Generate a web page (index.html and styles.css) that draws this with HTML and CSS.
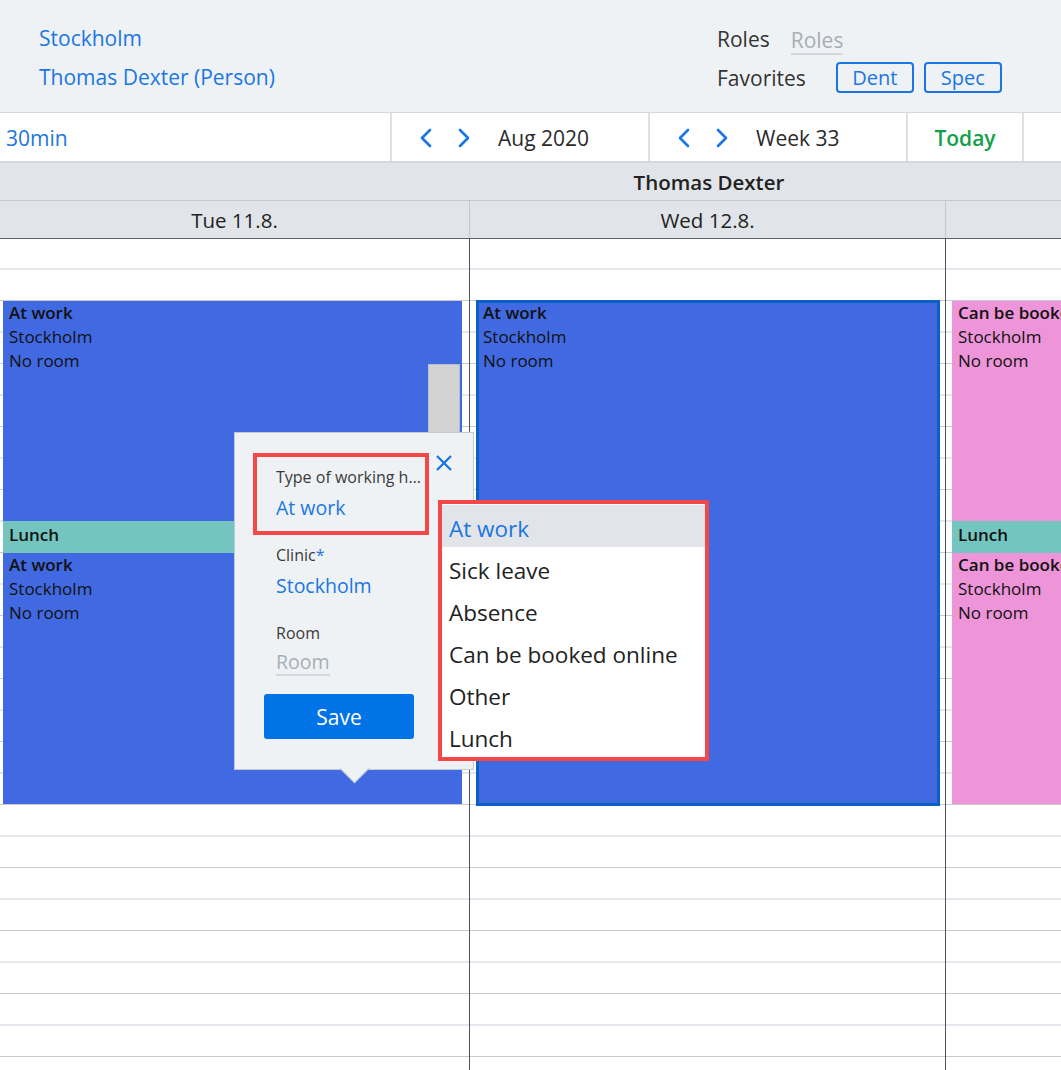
FILE: index.html
```html
<!DOCTYPE html>
<html>
<head>
<title>Schedule</title>
<link rel="stylesheet" href="styles.css">
</head>
<body>

<div class="topbar">
    <div class="topbar-left">
        <a class="link">Stockholm</a>
        <a class="link">Thomas Dexter (Person)</a>
    </div>
    <div class="topbar-right">
        <div class="top-row">
            <span class="top-label">Roles</span>
            <span class="placeholder roles-input">Roles</span>
        </div>
        <div class="top-row">
            <span class="top-label">Favorites</span>
            <button class="fav-btn">Dent</button>
            <button class="fav-btn">Spec</button>
        </div>
    </div>
</div>

<div class="toolbar">
    <div class="tool-seg seg-interval"><span class="link">30min</span></div>
    <div class="tool-seg seg-nav">
        <svg class="chev" viewBox="0 0 14 20"><polyline points="11,2 3,10 11,18"/></svg>
        <svg class="chev" viewBox="0 0 14 20"><polyline points="3,2 11,10 3,18"/></svg>
        <span class="nav-text">Aug 2020</span>
    </div>
    <div class="tool-seg seg-nav">
        <svg class="chev" viewBox="0 0 14 20"><polyline points="11,2 3,10 11,18"/></svg>
        <svg class="chev" viewBox="0 0 14 20"><polyline points="3,2 11,10 3,18"/></svg>
        <span class="nav-text">Week 33</span>
    </div>
    <div class="tool-seg seg-today">Today</div>
    <div class="tool-seg seg-rest"></div>
</div>

<div class="resource-row">
    <div class="resource-name">Thomas Dexter</div>
</div>

<div class="day-row">
    <div class="day-head col-tue">Tue 11.8.</div>
    <div class="day-head col-wed">Wed 12.8.</div>
    <div class="day-head col-thu"></div>
</div>

<div class="schedule">
    <div class="day-col col-tue">
        <div class="event at-work" style="top: 62px; height: 220px; left: 3px; width: 459px;">
            <div class="event-text"><b>At work</b><br>Stockholm<br>No room</div>
        </div>
        <div class="event lunch" style="top: 282px; height: 32px; left: 3px; width: 459px;">
            <div class="event-text"><b>Lunch</b></div>
        </div>
        <div class="event at-work" style="top: 314px; height: 251px; left: 3px; width: 459px;">
            <div class="event-text"><b>At work</b><br>Stockholm<br>No room</div>
        </div>
        <div class="resize-handle"></div>
    </div>
    <div class="day-col col-wed">
        <div class="event at-work selected" style="top: 61px; height: 506px; left: 6px; width: 464px;">
            <div class="event-text"><b>At work</b><br>Stockholm<br>No room</div>
        </div>
    </div>
    <div class="day-col col-thu">
        <div class="event online" style="top: 62px; height: 220px; left: 6px; width: 140px;">
            <div class="event-text"><b>Can be booked online</b><br>Stockholm<br>No room</div>
        </div>
        <div class="event lunch" style="top: 282px; height: 32px; left: 6px; width: 140px;">
            <div class="event-text"><b>Lunch</b></div>
        </div>
        <div class="event online" style="top: 314px; height: 251px; left: 6px; width: 140px;">
            <div class="event-text"><b>Can be booked online</b><br>Stockholm<br>No room</div>
        </div>
    </div>

    <div class="popup">
        <div class="field field-type">
            <div class="field-label ellipsis">Type of working hours</div>
            <div class="field-value">At work</div>
        </div>
        <svg class="close-btn" viewBox="0 0 18 18"><path d="M2 2 L16 16 M16 2 L2 16"/></svg>
        <div class="field">
            <div class="field-label">Clinic<span class="req">*</span></div>
            <div class="field-value">Stockholm</div>
        </div>
        <div class="field field-room">
            <div class="field-label">Room</div>
            <span class="placeholder room-input">Room</span>
        </div>
        <button class="save-btn">Save</button>
        <div class="popup-arrow"></div>
    </div>

    <ul class="type-list">
        <li class="active">At work</li>
        <li>Sick leave</li>
        <li>Absence</li>
        <li>Can be booked online</li>
        <li>Other</li>
        <li>Lunch</li>
    </ul>
</div>

</body>
</html>
```

FILE: styles.css
```css
body {
    font-family: 'Open Sans', 'Noto Sans', sans-serif;
    margin: 0;
    padding: 0;
    width: 1061px;
    height: 1070px;
    overflow: hidden;
    color: #222;
    background-color: white;
}
.link {
    color: #1a76e2;
    text-decoration: none;
}
.placeholder {
    color: #a8aeb5;
    border-bottom: 2px solid #d3d8de;
}

/* top bar */
.topbar {
    height: 112px;
    box-sizing: border-box;
    padding: 19px 0 0 39px;
    background-color: #eff2f5;
    display: flex;
}
.topbar-left {
    width: 678px;
    display: flex;
    flex-direction: column;
    font-size: 21px;
}
.topbar-left .link {
    height: 39px;
    line-height: 39px;
}
.topbar-right {
    display: flex;
    flex-direction: column;
    font-size: 21px;
}
.top-row {
    height: 39px;
    display: flex;
    align-items: center;
}
.top-label {
    color: #333;
}
.roles-input {
    margin: 4px 0 0 21px;
    line-height: 26px;
}
.fav-btn {
    font-family: inherit;
    font-size: 20px;
    color: #1a76e2;
    background: transparent;
    border: 2px solid #1a76e2;
    border-radius: 4px;
    width: 78px;
    height: 31px;
    padding: 0;
    margin-left: 10px;
    line-height: 26px;
}
.top-label + .fav-btn {
    margin-left: 30px;
}

/* toolbar */
.toolbar {
    display: flex;
    height: 51px;
    box-sizing: border-box;
    border-top: 1px solid #d5d9de;
    border-bottom: 2px solid #d5d9de;
    font-size: 21px;
}
.tool-seg {
    border-right: 2px solid #dde1e5;
    display: flex;
    align-items: center;
    padding-top: 2px;
    box-sizing: border-box;
}
.seg-interval {
    padding-left: 6px;
    width: 392px;
}
.seg-nav {
    width: 258px;
    padding-left: 27px;
}
.chev {
    width: 14px;
    height: 20px;
    margin-right: 24px;
    fill: none;
    stroke: #1a76e2;
    stroke-width: 2.6;
    stroke-linecap: round;
    stroke-linejoin: round;
}
.chev + .chev + .nav-text {
    margin-left: 3px;
}
.nav-text {
    color: #2a2a2a;
}
.seg-today {
    width: 116px;
    justify-content: center;
    color: #13a04a;
    font-weight: 600;
}
.seg-rest {
    flex: 1;
    border-right: none;
}

/* headers */
.resource-row {
    height: 38px;
    background-color: #e1e5e9;
    border-bottom: 1px solid #c3c8ce;
    box-sizing: border-box;
}
.resource-name {
    width: 1418px;
    text-align: center;
    line-height: 39px;
    font-size: 20.5px;
    font-weight: 600;
}
.day-row {
    display: flex;
    height: 38px;
    background-color: #e1e5e9;
    border-bottom: 1px solid #5b6169;
    box-sizing: border-box;
    font-size: 20.5px;
}
.day-head {
    line-height: 39px;
    text-align: center;
    border-right: 1px solid #c3c8ce;
}
.col-tue {
    width: 470px;
    flex: 0 0 470px;
    box-sizing: border-box;
}
.col-wed {
    width: 476px;
    flex: 0 0 476px;
    box-sizing: border-box;
}
.col-thu {
    flex: 1;
    border-right: none;
}

/* schedule grid */
.schedule {
    position: relative;
    display: flex;
    height: 840px;
}
.day-col {
    position: relative;
    border-right: 1px solid #4e545b;
    background-image: repeating-linear-gradient(to bottom,
        transparent 0, transparent 30px,
        #e4e7eb 30px, #e4e7eb 32px,
        transparent 32px, transparent 62px,
        #c5cad0 62px, #c5cad0 63.5px,
        transparent 63.5px, transparent 63px);
    background-size: 100% 63px;
    background-position: 0 -1px;
}
.day-col.col-thu {
    border-right: none;
}
.event {
    position: absolute;
    box-sizing: border-box;
    padding: 0 6px;
    font-size: 17px;
    line-height: 24px;
    color: #111;
    overflow: hidden;
    white-space: nowrap;
}
.event b {
    font-weight: 600;
}
.at-work {
    background-color: #4169e1;
}
.online {
    background-color: #ed95d8;
}
.lunch {
    background-color: #74c5c0;
    line-height: 28px;
}
.selected {
    border: 3px solid #0a60c4;
    padding: 0 4px;
}
.selected .event-text {
    margin-top: -2px;
}
.resize-handle {
    position: absolute;
    left: 428px;
    top: 125px;
    width: 32px;
    height: 90px;
    box-sizing: border-box;
    background-color: #d3d3d3;
    border: 1px solid #b4c0cb;
}

/* edit popup */
.popup {
    position: absolute;
    left: 234px;
    top: 193px;
    width: 240px;
    height: 338px;
    box-sizing: border-box;
    background-color: #eff2f5;
    border: 1px solid #c3c9d0;
    padding: 20px 0 0 0;
    z-index: 2;
}
.field {
    padding-left: 41px;
}
.field-type {
    margin-left: 18px;
    padding: 9px 0 8px 19px;
    width: 176px;
    box-sizing: border-box;
    border: 4px solid #f44747;
    margin-bottom: 9px;
}
.field-label {
    font-size: 16px;
    line-height: 22px;
    color: #3a3a3a;
}
.ellipsis {
    width: 150px;
    white-space: nowrap;
    overflow: hidden;
    text-overflow: ellipsis;
}
.req {
    color: #1a76e2;
}
.field-value {
    margin-top: 5px;
    font-size: 19.5px;
    line-height: 30px;
    color: #1a76e2;
}
.field-room {
    margin-top: 21px;
}
.room-input {
    display: inline-block;
    margin-top: 5px;
    font-size: 19.5px;
    line-height: 25px;
}
.close-btn {
    position: absolute;
    right: 20px;
    top: 21px;
    width: 18px;
    height: 18px;
    stroke: #1a76e2;
    stroke-width: 2.3;
    fill: none;
}
.save-btn {
    display: block;
    margin: 18px 0 0 29px;
    width: 150px;
    height: 45px;
    border: none;
    border-radius: 3px;
    background-color: #0073e6;
    color: white;
    font-family: inherit;
    font-size: 21px;
}
.popup-arrow {
    position: absolute;
    left: 109px;
    bottom: -10px;
    width: 20px;
    height: 20px;
    background-color: #eff2f5;
    border-right: 1px solid #c3c9d0;
    border-bottom: 1px solid #c3c9d0;
    transform: rotate(45deg);
}

/* type dropdown */
.type-list {
    position: absolute;
    left: 438px;
    top: 261px;
    width: 271px;
    box-sizing: border-box;
    margin: 0;
    padding: 1px 0 0 0;
    list-style: none;
    background-color: white;
    border: 4px solid #f44747;
    z-index: 3;
    font-size: 22.5px;
}
.type-list li {
    height: 42px;
    box-sizing: border-box;
    padding: 6px 0 0 7px;
    line-height: 36px;
    color: #222;
}
.type-list li.active {
    background-color: #e1e5e9;
    color: #1a76e2;
}
```
